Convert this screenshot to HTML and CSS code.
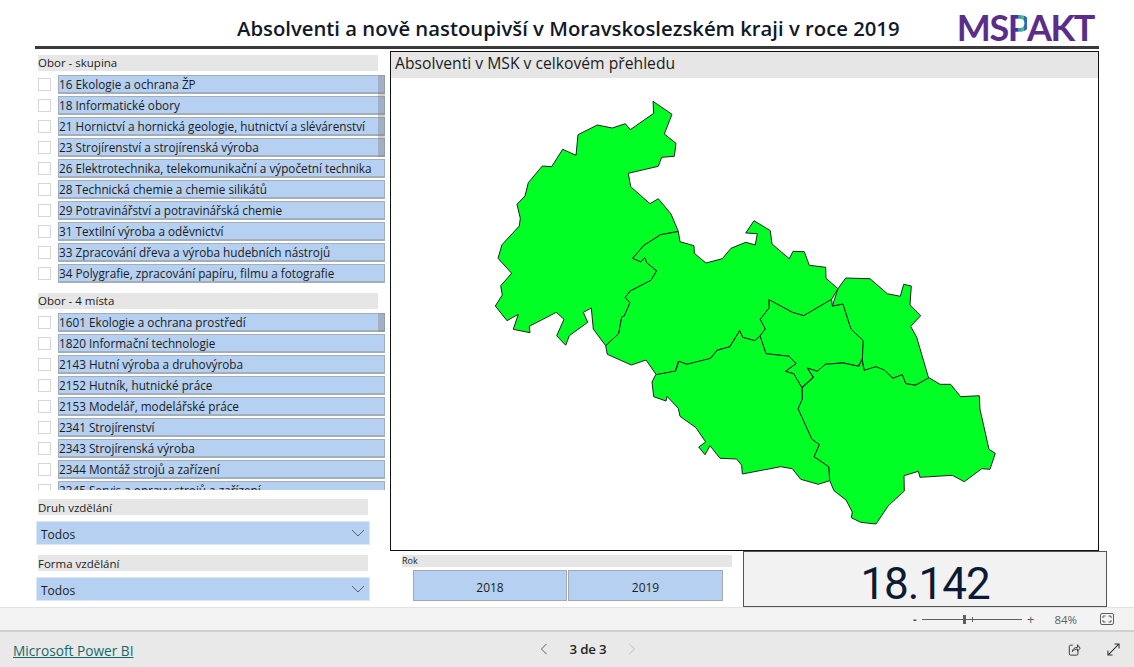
FILE: index.html
```
<!DOCTYPE html>
<html lang="cs">
<head>
<meta charset="utf-8">
<title>Absolventi a nově nastoupivší</title>
<link rel="stylesheet" href="styles.css">
</head>
<body>
<main class="report">
  <header class="head">
    <h1 class="title">Absolventi a nově nastoupivší v Moravskoslezském kraji v roce 2019</h1>
    <div class="logo">MS<span class="logo-p">P</span>AKT</div>
  </header>
  <div class="body">
    <section class="left">
      <div class="slicer-title">Obor - skupina</div>
      <div class="list list-a">
        <div class="row"><i class="check"></i><span class="item">16 Ekologie a ochrana ŽP</span></div>
        <div class="row"><i class="check"></i><span class="item">18 Informatické obory</span></div>
        <div class="row"><i class="check"></i><span class="item">21 Hornictví a hornická geologie, hutnictví a slévárenství</span></div>
        <div class="row"><i class="check"></i><span class="item">23 Strojírenství a strojírenská výroba</span></div>
        <div class="row"><i class="check"></i><span class="item">26 Elektrotechnika, telekomunikační a výpočetní technika</span></div>
        <div class="row"><i class="check"></i><span class="item">28 Technická chemie a chemie silikátů</span></div>
        <div class="row"><i class="check"></i><span class="item">29 Potravinářství a potravinářská chemie</span></div>
        <div class="row"><i class="check"></i><span class="item">31 Textilní výroba a oděvnictví</span></div>
        <div class="row"><i class="check"></i><span class="item">33 Zpracování dřeva a výroba hudebních nástrojů</span></div>
        <div class="row"><i class="check"></i><span class="item">34 Polygrafie, zpracování papíru, filmu a fotografie</span></div>
        <div class="thumb thumb-a"></div>
      </div>
      <div class="slicer-title title-b">Obor - 4 místa</div>
      <div class="list list-b">
        <div class="row"><i class="check"></i><span class="item">1601 Ekologie a ochrana prostředí</span></div>
        <div class="row"><i class="check"></i><span class="item">1820 Informační technologie</span></div>
        <div class="row"><i class="check"></i><span class="item">2143 Hutní výroba a druhovýroba</span></div>
        <div class="row"><i class="check"></i><span class="item">2152 Hutník, hutnické práce</span></div>
        <div class="row"><i class="check"></i><span class="item">2153 Modelář, modelářské práce</span></div>
        <div class="row"><i class="check"></i><span class="item">2341 Strojírenství</span></div>
        <div class="row"><i class="check"></i><span class="item">2343 Strojírenská výroba</span></div>
        <div class="row"><i class="check"></i><span class="item">2344 Montáž strojů a zařízení</span></div>
        <div class="row"><i class="check"></i><span class="item">2345 Servis a opravy strojů a zařízení</span></div>
        <div class="thumb thumb-b"></div>
      </div>
      <div class="slicer-title short title-c">Druh vzdělání</div>
      <div class="drop"><span class="drop-text">Todos</span><svg class="chev" viewBox="0 0 14 8"><path d="M1 1l6 6 6-6"/></svg></div>
      <div class="slicer-title short title-d">Forma vzdělání</div>
      <div class="drop"><span class="drop-text">Todos</span><svg class="chev" viewBox="0 0 14 8"><path d="M1 1l6 6 6-6"/></svg></div>
    </section>
    <section class="mid">
      <div class="map-card">
        <div class="map-title">Absolventi v MSK v celkovém přehledu</div>
        <svg class="map" viewBox="391 78 707 472">
          <path d="M653 101.3 672 114.3 664.3 134 676 143.3 674.3 156.3 661.7 157.3 658.3 166.3 628.3 173.3 630.7 186.7 650 203.7 658.3 198.7 671 214 678.3 231.3 660.7 234.7 644 245.3 632.7 258.3 640.7 261.7 645 257.7 646.7 262.7 656.7 270.7 651 280.3 630.3 291 625.3 297.3 630 302.7 624.3 316 621.7 317 618.7 333.7 605.7 345.7 593.3 329 591.3 308 583.3 312.3 587.7 322.3 569.3 335.7 565.7 345.3 556.7 335.7 564 319.3 556.3 312.3 529.3 326.3 530 332.7 513.3 329.3 518.3 314.3 507 320.7 495.3 306 502.3 295 500.7 285.7 511.7 273.3 498 258.3 502 244.7 519.3 226 520.3 218.3 517 204.3 525 196 528.3 182.7 542.3 166 551.7 166.7 562.7 149.3 576 155.3 578 134.7 597.3 125 612.3 128 625.3 123.7 630.3 129.7 653.7 113.3Z"/>
          <path d="M678.3 231.5 680 241.7 694 245.7 694.3 253.3 706 263 722.3 258.7 731 248.3 745.7 242.3 755.3 245 757.3 233.7 745.7 233 754 220.7 770.3 230.7 772 244 789.3 258.7 793 251.3 804.3 251.7 809.3 265.3 825.7 267.3 826 278.3 838 288.7 831.7 299.3 803.7 315.7 792.3 312.3 769 299.7 769.3 307.7 760.3 319.3 765.3 329 760 336 755 340.7 742.7 337.3 739.7 330.7 729.3 347 717.3 350 710 358.7 687.7 364.3 678.3 361.3 675.3 371.3 656.3 374.7 646 360 631.3 365 607.3 354.3 605.7 345.7 618.7 333.7 621.7 317 624.3 316 630 302.7 625.3 297.3 630.3 291 651 280.3 656.7 270.7 646.7 262.7 645 257.7 640.7 261.7 632.7 258.3 644 245.3 660.7 234.7Z"/>
          <path d="M769 299.7 792.3 312.3 803.7 315.7 831.7 299.3 832.3 306 843 304 851 329 863.3 340.7 862.3 360 857.7 366 842.7 362.7 825.7 364.3 817.3 371.3 807.3 368 813 377.3 801.7 387.3 793.7 373.7 785.3 371.3 796 363.7 789.3 356.3 766 353.7 760 336 765.3 329 760.3 319.3 769.3 307.7Z"/>
          <path d="M838 288.7 845.7 278 870 278.7 887.3 293.7 900.3 296.3 903.7 284.3 911.3 286 910 305 920.7 315.7 910.7 326.3 916.7 337.3 928.7 378.3 915.3 385 905.7 383.7 902.3 374.7 893.3 378.3 882.7 369.7 876 367 864.3 370.3 862.3 360 863.3 340.7 851 329 843 304 832.3 306Z"/>
          <path d="M929 377.7 940 384.3 950.7 384.3 960.7 396.7 979.3 395.7 980 409.3 989 449.3 995.3 453.3 990 469.3 981.7 468.7 964.3 481.7 952.3 475.3 920 477.3 918.3 471.3 904 475.7 904.3 491 888.3 505.7 876 524 860.7 522.3 851.3 517.7 852.3 512 846 500 834 490.7 829.7 480.7 828.7 466.7 814 456.7 819.3 444.7 811.7 439 798 408.7 802.3 399 802 388 813.7 377.3 807.3 368 817.3 371.3 825.3 364.3 842.7 363 859 366.3 861.7 359.3 864 370.3 876 366.7 884.3 370 892.7 378.3 902.3 374.7 905.7 383.7 915.7 385.3Z"/>
          <path d="M655.7 374.7 675.7 371 679 361.3 686.7 364.3 710.7 358.3 717.3 350.3 730 346.7 739.7 330.7 742.7 337.3 755 340.7 760 336 766 353.7 789.3 356.3 796 363.7 785.3 371.3 793.7 373.7 802 388 802.3 399 798 408.7 811.7 439 819.3 444.7 814 456.7 828.7 466.7 829.7 480.7 818.3 484.3 800.7 479.3 792.3 468.7 780.7 466.7 742.3 474 741.7 465.3 736.7 459 720 458.3 710 445.7 705 454.7 698.7 447 705.7 442 696 427.7 680 416.3 678.3 408.3 667 396.3 666 401 653.7 396.7 652 382Z"/>
        </svg>
      </div>
      <div class="bottom">
        <div class="year">
          <div class="year-title">Rok</div>
          <div class="year-buttons">
            <div class="year-btn">2018</div>
            <div class="year-btn">2019</div>
          </div>
        </div>
        <div class="kpi">18.142</div>
      </div>
    </section>
  </div>
</main>
<div class="zoombar">
  <span class="minus">-</span>
  <div class="slider"><i class="tick"></i><i class="knob"></i></div>
  <span class="plus">+</span>
  <span class="pct">84%</span>
  <svg class="fit" viewBox="0 0 14 12"><rect x="0.5" y="0.5" width="13" height="11" rx="1.5"/><path d="M3 5V3h2.5M11 5V3H8.500M3 7v2h2.500M11 7v2H8.500"/></svg>
</div>
<footer class="foot">
  <a class="brand" href="#">Microsoft Power BI</a>
  <nav class="pager">
    <svg class="arrow" viewBox="0 0 8 14"><path d="M7 1 1 7l6 6"/></svg>
    <span class="pages">3 de 3</span>
    <svg class="arrow off" viewBox="0 0 8 14"><path d="M1 1l6 6-6 6"/></svg>
  </nav>
  <div class="tools">
    <svg class="tool" viewBox="0 0 14 15"><path d="M5 2.500H2.500a1.500 1.500 0 0 0-1.500 1.500v8.500A1.500 1.500 0 0 0 2.500 14h7a1.500 1.500 0 0 0 1.500-1.500V9M4.500 10c.3-3 2.500-5 6-5V2l3 4-3 3.500V7c-2.500 0-4.500 1-6 3z"/></svg>
    <svg class="tool" viewBox="0 0 14 14"><path d="M8 1h5v5M13 1 1 13M1 8v5h5"/></svg>
  </div>
</footer>
</body>
</html>
```
FILE: styles.css
```
* { box-sizing: border-box; }
html, body { margin: 0; padding: 0; }
body { width: 1134px; height: 667px; overflow: hidden; background: #fff; font-family: "Open Sans", "Noto Sans", sans-serif; color: #222; }

.report { height: 607px; overflow: hidden; background: #fff; }
.head { display: flex; align-items: flex-start; width: 1064px; height: 49px; margin-left: 35px; border-bottom: 3px solid #3a3a3a; }
.title { margin: 15px 0 0 202px; font-size: 20.300px; line-height: 26px; font-weight: 600; color: #111827; white-space: nowrap; }
.logo { margin: 7px 5px 0 auto; font-family: "Lato", sans-serif; font-weight: 700; font-size: 36px; line-height: 40px; color: #5b2d8a; letter-spacing: -1.400px; }
.logo-p { background: linear-gradient(90deg, #5b2d8a 0 52%, #2a9fc9 52% 70%, #5db56a 70% 85%, #2a6fb0 85%); -webkit-background-clip: text; background-clip: text; color: transparent; }

.body { display: flex; gap: 5px; padding-left: 35px; }
.left { width: 350px; flex: none; padding-top: 6px; }
.slicer-title { margin-left: 3px; width: 340px; height: 16px; background: #e6e6e6; font-size: 11.500px; line-height: 16px; color: #1c1c1c; }
.slicer-title.short { width: 330px; line-height: 18px; }
.title-b { margin-top: 8px; }
.title-c { margin-top: 9px; }
.title-d { margin-top: 10px; }

.list { position: relative; margin-top: 4px; overflow: hidden; }
.list-a { height: 210px; }
.list-b { height: 177px; }
.row { display: flex; align-items: center; gap: 7px; height: 19px; margin: 0 0 2px 3px; }
.check { flex: none; width: 13px; height: 13px; border: 1px solid #d6d6d6; background: #fff; }
.item { flex: 1; height: 19px; background: #b5d0f0; border: 1px solid #a4aebb; border-width: 1px 1px 2px 1px; font-size: 11.750px; line-height: 17px; color: #1c1c1c; white-space: nowrap; overflow: hidden; }
.thumb { position: absolute; right: 0; width: 7px; background: rgba(120, 120, 120, .35); }
.thumb-a { top: 0; height: 82px; }
.thumb-b { top: 0; height: 19px; }

.drop { display: flex; align-items: center; justify-content: space-between; width: 334px; height: 24px; margin: 6px 0 0 1px; padding: 0 4px; background: #b5d0f0; border: 1px solid #dde8f6; font-size: 12px; color: #1c1c1c; }
.drop-text { margin-top: 3px; }
.chev { width: 14px; height: 8px; fill: none; stroke: #55606e; stroke-width: 1; }

.mid { width: 717px; flex: none; padding-top: 2px; }
.map-card { width: 709px; height: 500px; border: 1px solid #111; background: #fff; }
.map-title { height: 26px; padding-left: 4px; background: #e6e6e6; font-size: 15.700px; line-height: 23px; color: #1c1c1c; }
.map { display: block; width: 707px; height: 472px; }
.map path { fill: #00ff24; stroke: #222; stroke-width: 1; stroke-linejoin: round; }

.bottom { display: flex; }
.year { width: 353px; padding: 4px 0 0 12px; }
.year-title { width: 330px; height: 12px; background: #e6e6e6; font-size: 9px; line-height: 12px; color: #1c1c1c; }
.year-buttons { display: flex; gap: 1px; margin: 3px 0 0 11px; }
.year-btn { width: 154px; height: 31px; padding-top: 2px; background: #b5d0f0; border: 1px solid #a0aab6; font-size: 12px; line-height: 29px; text-align: center; color: #1c1c1c; }
.year-btn + .year-btn { width: 155px; }
.kpi { width: 364px; height: 56px; padding-top: 10px; background: #f2f2f2; border: 1px solid #555; font-family: "Roboto", sans-serif; font-size: 44px; line-height: 44px; letter-spacing: -1px; text-align: center; color: #0d1a33; }

.zoombar { display: flex; align-items: center; height: 23px; background: #f3f3f3; border-top: 1px solid #e2e2e2; padding-left: 913px; font-size: 11.500px; color: #605e5c; }
.minus { width: 9px; font-weight: 700; }
.slider { position: relative; width: 100px; height: 1px; background: #605e5c; }
.knob { position: absolute; left: 41px; top: -4px; width: 3px; height: 9px; background: #605e5c; }
.tick { position: absolute; left: 50px; top: -2px; width: 1px; height: 5px; background: #605e5c; }
.plus { margin-left: 5px; font-size: 13px; color: #605e5c; }
.pct { margin-left: 20px; }
.fit { width: 14px; height: 12px; margin-left: 23px; fill: none; stroke: #605e5c; stroke-width: 1; }

.foot { display: flex; align-items: center; position: relative; height: 37px; background: #e9e9e9; border-top: 2px solid #d0d0d0; padding: 0 14px 1px 13px; }
.brand { font-size: 13.700px; margin-top: 2px; color: #16696b; text-decoration: underline; }
.pager { display: flex; align-items: center; gap: 22px; margin-left: 406px; font-size: 13.300px; font-weight: 600; letter-spacing: -.2px; color: #252423; }
.arrow { width: 8px; height: 12px; fill: none; stroke: #555; stroke-width: 1.100; }
.arrow.off { stroke: #bbb; }
.tools { display: flex; align-items: center; gap: 26px; margin-left: auto; }
.tool { width: 13px; height: 13px; fill: none; stroke: #333; stroke-width: 1.100; }
```
